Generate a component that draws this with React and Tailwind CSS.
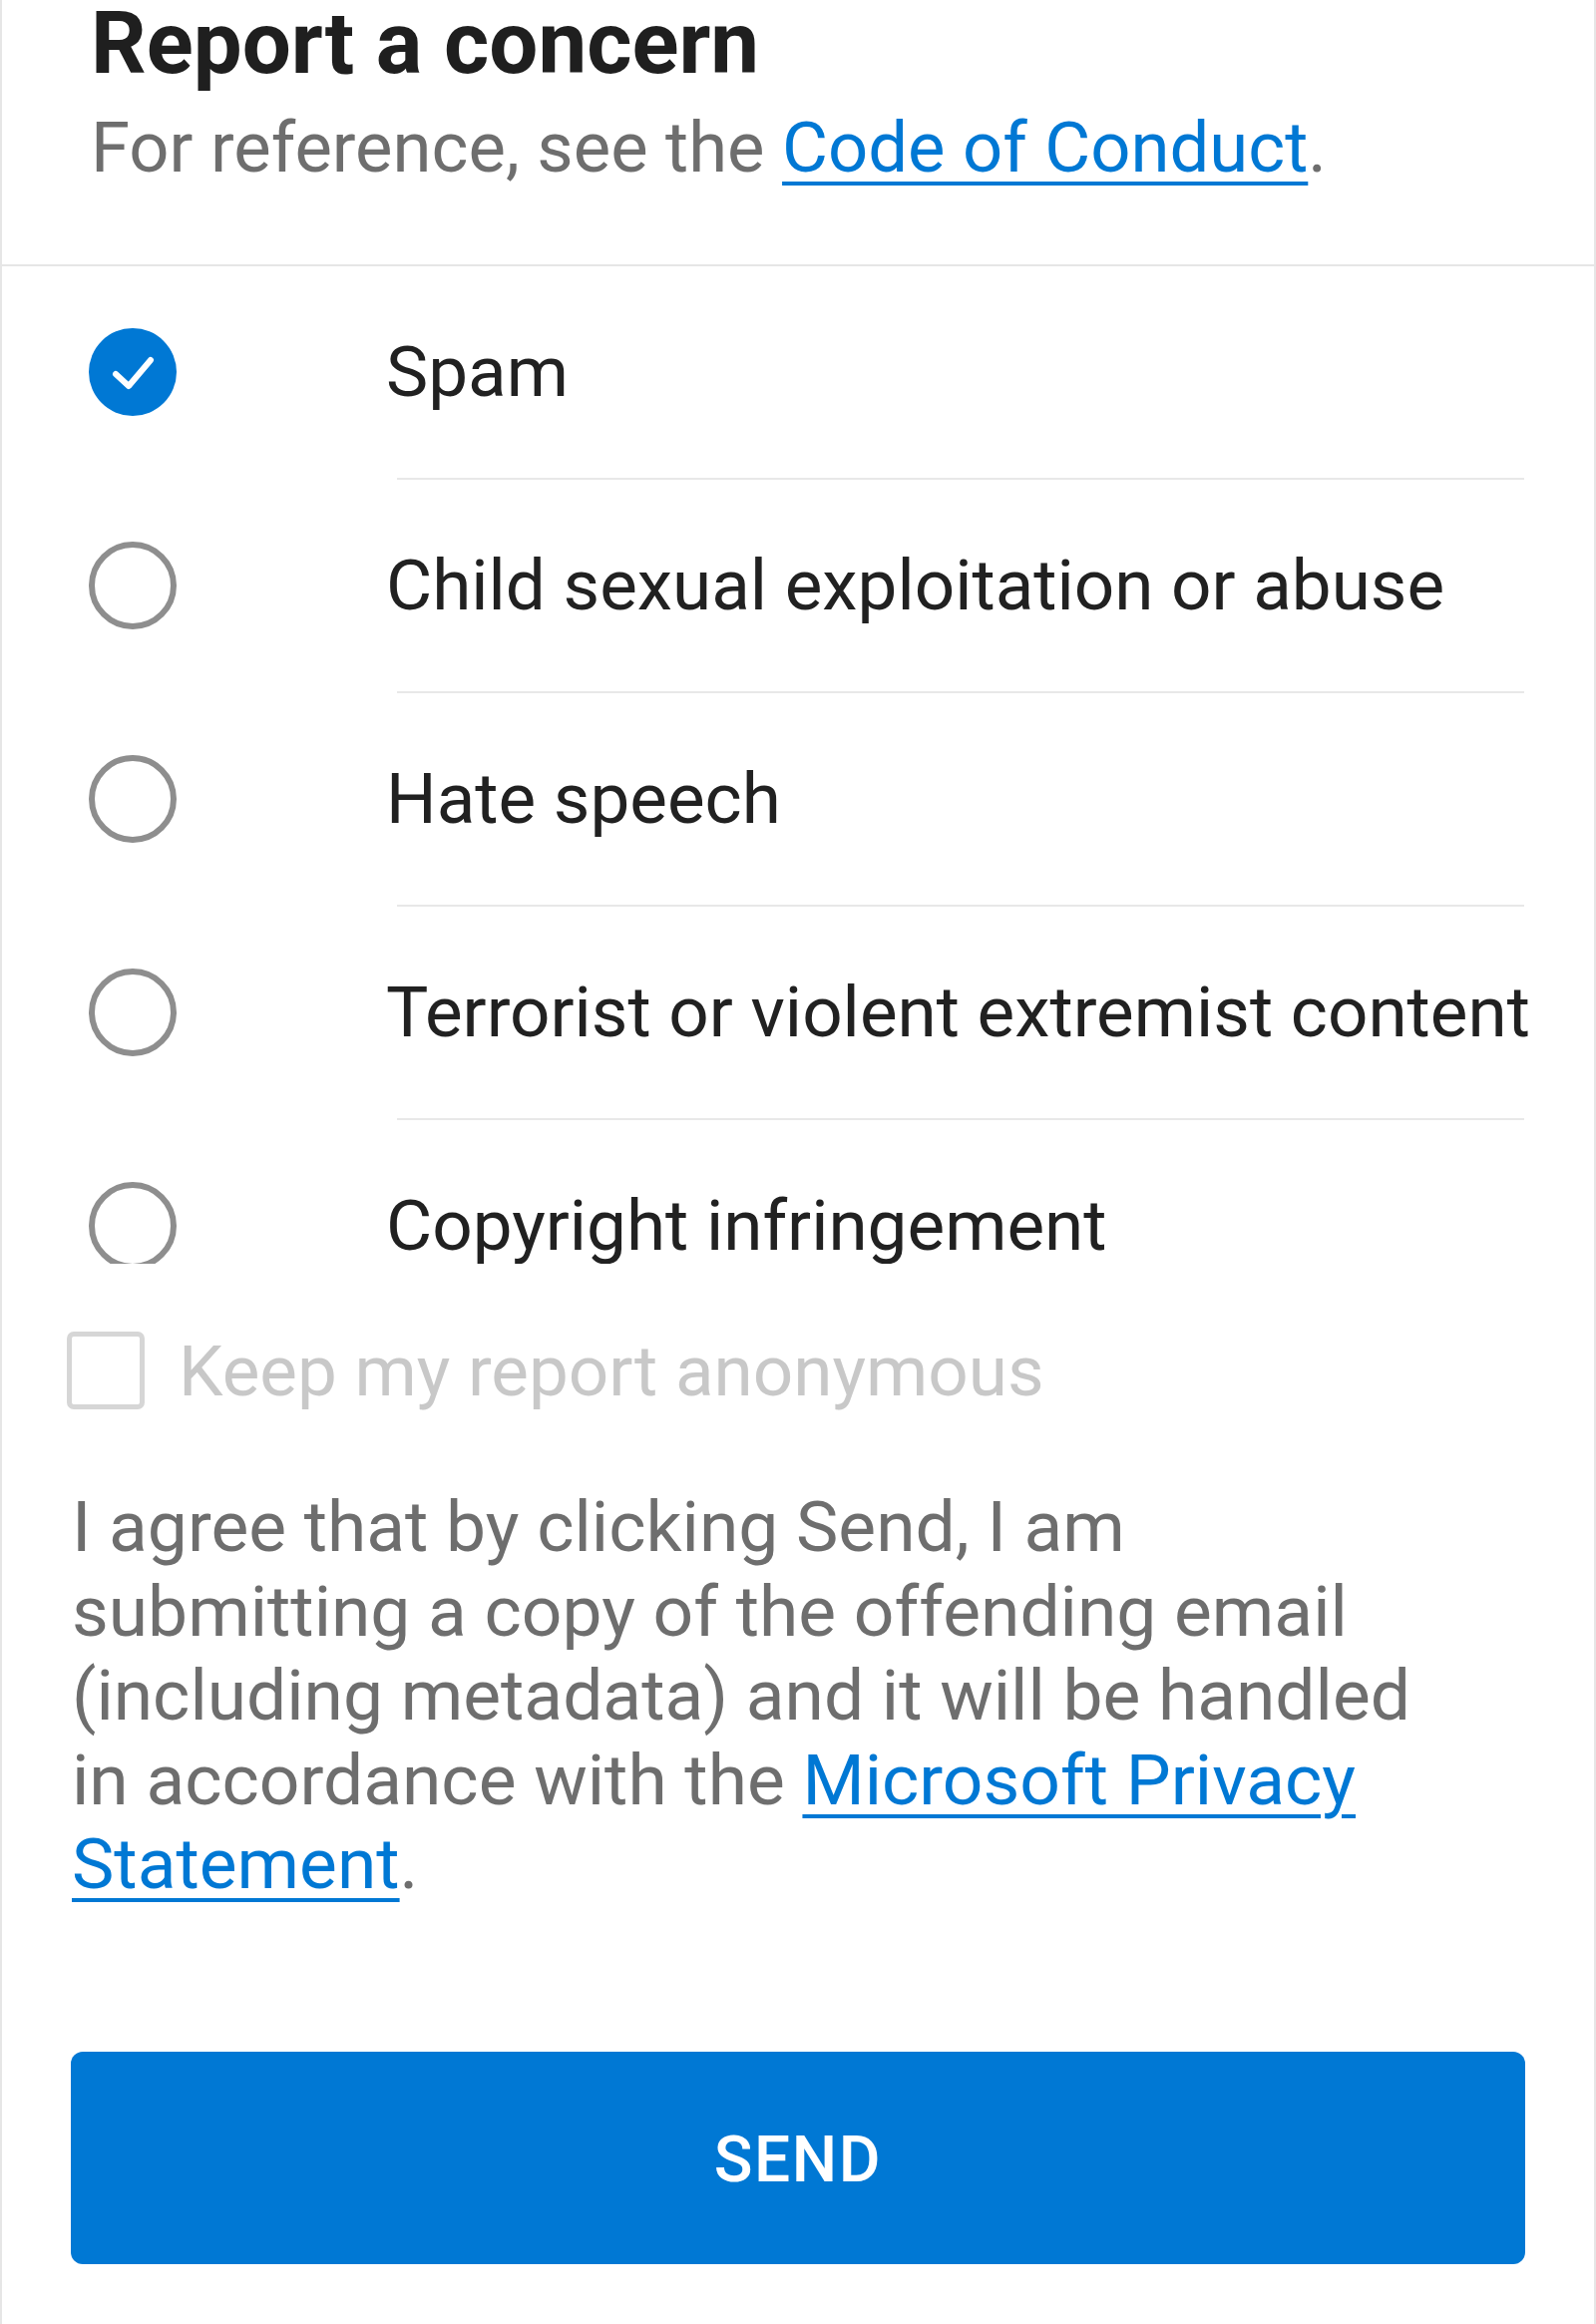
import React from 'react';

const options = [
  { label: 'Spam', checked: true },
  { label: 'Child sexual exploitation or abuse' },
  { label: 'Hate speech' },
  { label: 'Terrorist or violent extremist content' },
  { label: 'Copyright infringement' },
];

function Radio({ checked }) {
  if (checked) {
    return (
      <svg width="88" height="88" viewBox="0 0 88 88">
        <circle cx="44" cy="44" r="44" fill="#0078d4" />
        <path d="M27 46 L40 58 L62 32" fill="none" stroke="#fff" strokeWidth="6" strokeLinecap="round" strokeLinejoin="round" />
      </svg>
    );
  }
  return (
    <svg width="88" height="88" viewBox="0 0 88 88">
      <circle cx="44" cy="44" r="41" fill="none" stroke="#8e8e8e" strokeWidth="6" />
    </svg>
  );
}

export default function App() {
  return (
    <div
      className="w-[1600px] h-[2330px] overflow-hidden bg-white border-x-2 border-[#e6e6e6]"
      style={{ fontFamily: 'Roboto, "Noto Sans", sans-serif' }}
    >
      {/* header */}
      <div className="pl-[89px] pb-[82px]">
        <h1 className="text-[87px] leading-none font-bold text-[#1f1f1f]">Report a concern</h1>
        <p className="mt-[26px] text-[70.6px] leading-[70px] text-[#6e6e6e]">
          For reference, see the{' '}
          <a href="#" className="text-[#0078d4] underline decoration-[4px] underline-offset-[10px]">
            Code of Conduct
          </a>
          .
        </p>
      </div>
      <div className="h-[2px] bg-[#e6e6e6]" />

      {/* options list */}
      <div className="h-[1000px] overflow-hidden">
        {options.map((opt, i) => (
          <div key={opt.label}>
            <div className="h-[212px] flex items-center">
              <div className="w-[385px] pl-[87px] flex-none flex">
                <Radio checked={opt.checked} />
              </div>
              <span className="text-[71px] leading-[70px] text-[#212121] whitespace-nowrap">{opt.label}</span>
            </div>
            {i < options.length - 1 && <div className="ml-[396px] w-[1130px] h-[2px] bg-[#e8e8e8]" />}
          </div>
        ))}
      </div>

      {/* anonymous checkbox */}
      <div className="pt-[68px] pl-[65px] flex items-center gap-[34px]">
        <div className="w-[78px] h-[78px] rounded-[7px] border-[5px] border-[#d6d6d6] flex-none" />
        <span className="text-[71px] leading-none text-[#c8c8c8]">Keep my report anonymous</span>
      </div>

      {/* consent */}
      <p className="mt-[76px] pl-[70px] w-[1470px] text-[71.3px] leading-[84.5px] text-[#6e6e6e]">
        I agree that by clicking Send, I am submitting a copy of the offending email (including metadata) and it will be handled in accordance with the{' '}
        <a href="#" className="text-[#0078d4] underline decoration-[4px] underline-offset-[10px]">
          Microsoft Privacy Statement
        </a>
        .
      </p>

      {/* send */}
      <div className="mt-[145px] px-[69px]">
        <button className="w-full h-[213px] rounded-[12px] bg-[#0078d4] text-white text-[64px] font-medium tracking-wide pt-[6px]">
          SEND
        </button>
      </div>
    </div>
  );
}
